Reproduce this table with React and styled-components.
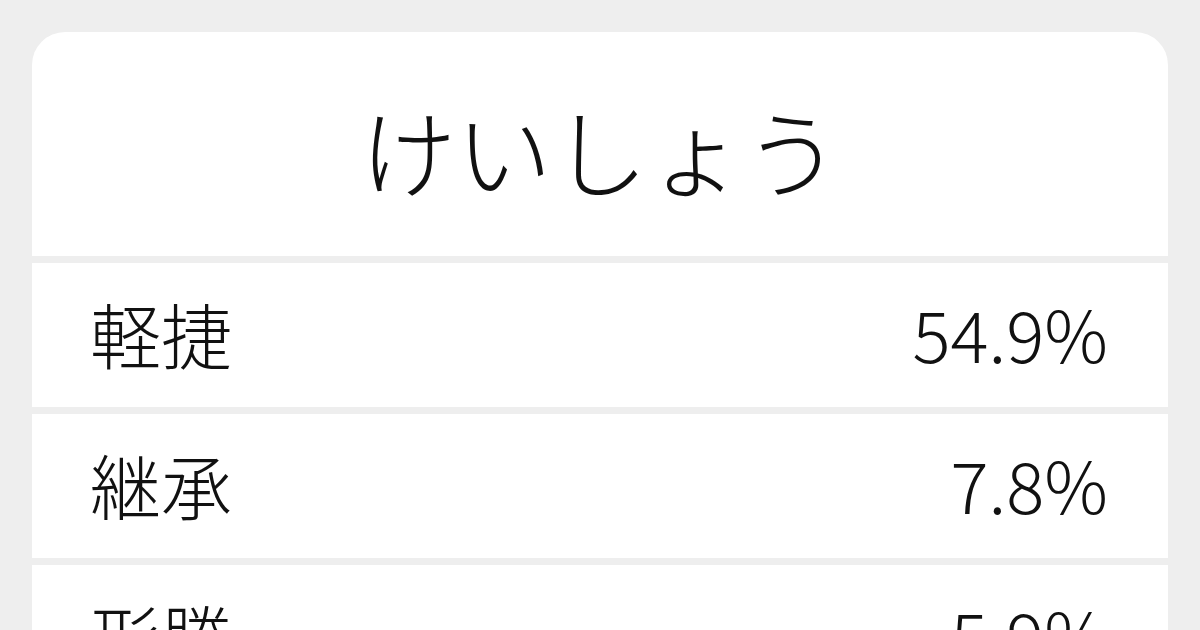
import React from 'react';
import styled, { createGlobalStyle } from 'styled-components';

const GlobalStyle = createGlobalStyle`
  html, body {
    margin: 0;
    padding: 0;
    background: #eeeeee;
  }
  body {
    font-family: "Noto Sans CJK JP", "Noto Sans", sans-serif;
    color: #111;
  }
`;

const Page = styled.div`
  width: 1200px;
  height: 630px;
  overflow: hidden;
  padding: 32px 32px 0;
  box-sizing: border-box;
`;

const Card = styled.div`
  border-radius: 33px 33px 0 0;
  overflow: hidden;
  display: flex;
  flex-direction: column;
  gap: 7px;
  background: #eeeeee;
`;

const Header = styled.div`
  height: 224px;
  background: #fff;
  display: flex;
  align-items: center;
  justify-content: center;
  font-size: 96px;
  font-weight: 300;
  padding-top: 8px;
  box-sizing: border-box;
`;

const Row = styled.div`
  height: 144px;
  background: #fff;
  display: flex;
  align-items: center;
  justify-content: space-between;
  padding: 0 60px 6px 58px;
  box-sizing: border-box;
  font-size: 71px;
  font-weight: 300;
`;

const Word = styled.span``;

const Share = styled.span``;

const results = [
  { word: '軽捷', share: '54.9%' },
  { word: '継承', share: '7.8%' },
  { word: '形勝', share: '5.9%' },
];

const App = () => (
  <Page>
    <GlobalStyle />
    <Card>
      <Header>けいしょう</Header>
      {results.map(r => (
        <Row key={r.word}>
          <Word>{r.word}</Word>
          <Share>{r.share}</Share>
        </Row>
      ))}
    </Card>
  </Page>
);

export default App;
